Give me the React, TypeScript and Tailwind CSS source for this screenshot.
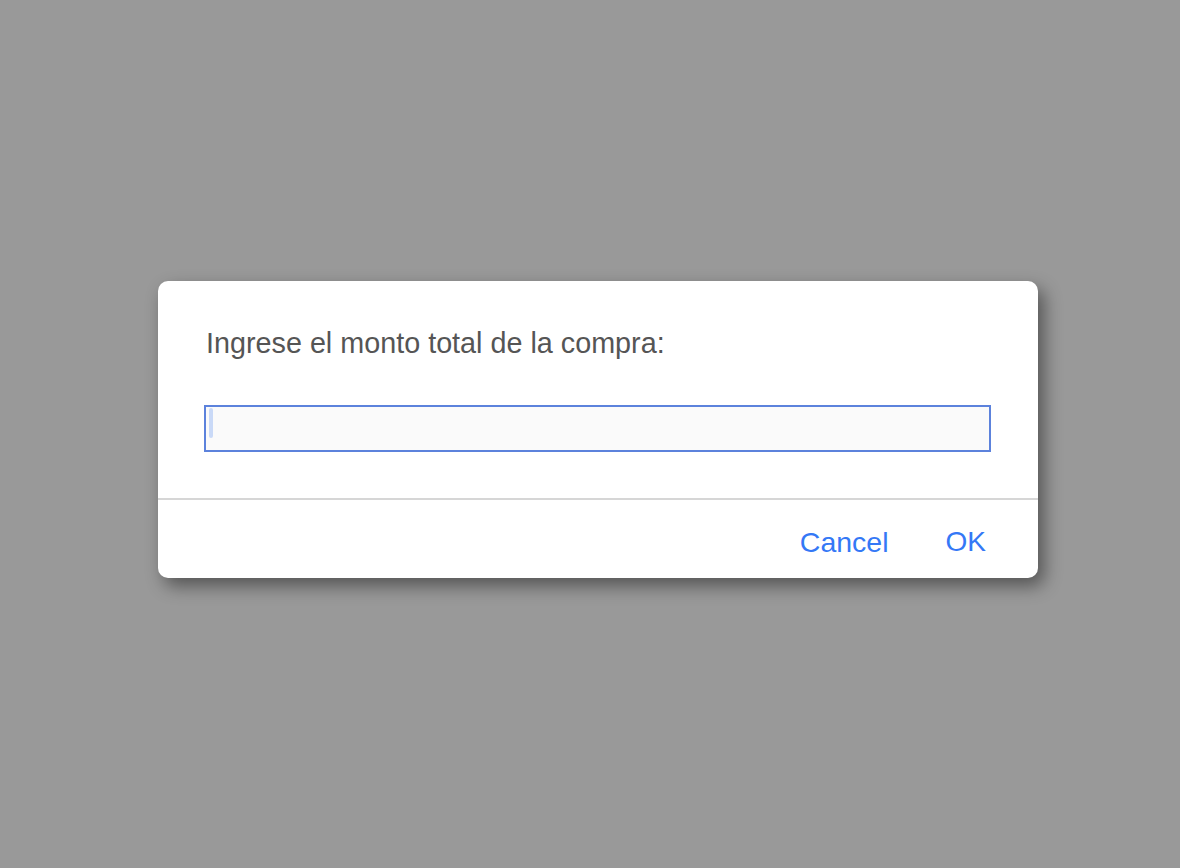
export default function App() {
  return (
    <div className="min-h-screen w-full bg-[#999999] flex items-start pl-[158px] pt-[281px] font-['Liberation_Sans',Arial,sans-serif]">
      <div className="w-[880px] bg-white rounded-[10px] shadow-[6px_8px_18px_rgba(0,0,0,0.45)] flex flex-col">
        <div className="px-[46px] pt-[46px] pb-[46px]">
          <p className="text-[28.75px] leading-[32px] text-[#555555] pl-[2px]">
            Ingrese el monto total de la compra:
          </p>
          <div className="mt-[46px] h-[47px] w-[787px] border-2 border-[#5c82dc] bg-[#fafafa] flex items-start pl-[3px] pt-[1px]">
            <span className="block w-[4px] h-[30px] rounded-full bg-[#c9d9f7]" />
          </div>
        </div>
        <div className="h-[2px] bg-[#d6d6d6]" />
        <div className="flex justify-end items-center gap-[57px] pr-[52px] pt-[6px] h-[78px]">
          <button className="text-[28.5px] text-[#3478f6]">Cancel</button>
          <button className="text-[28px] text-[#3478f6]">OK</button>
        </div>
      </div>
    </div>
  )
}
